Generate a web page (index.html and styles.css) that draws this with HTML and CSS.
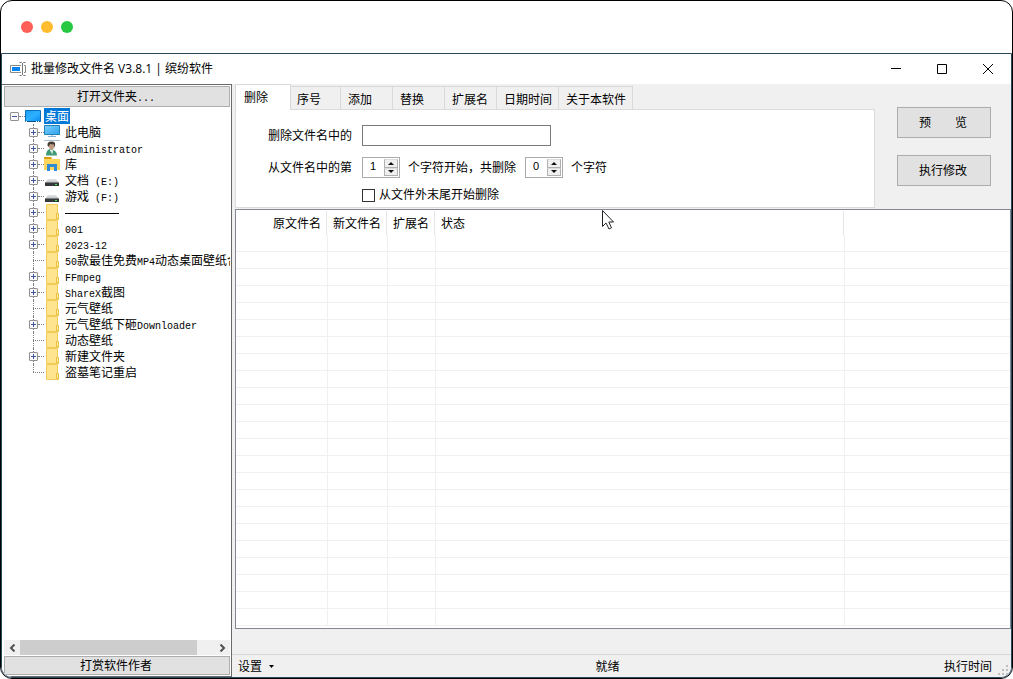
FILE: index.html
```html
<!DOCTYPE html>
<html lang="zh-CN">
<head>
<meta charset="utf-8">
<title>批量修改文件名 V3.8.1 | 缤纷软件</title>
<link rel="stylesheet" href="styles.css">
</head>
<body>
<svg class="defs" aria-hidden="true">
  <defs>
    <linearGradient id="blue" x1="0" y1="0" x2="1" y2="1"><stop offset="0" stop-color="#1ba1f8"/><stop offset=".5" stop-color="#2fb0ff"/><stop offset="1" stop-color="#0a8cf0"/></linearGradient>
    <linearGradient id="sky" x1="0" y1="0" x2="1" y2="1"><stop offset="0" stop-color="#7fd0fb"/><stop offset="1" stop-color="#2da3ee"/></linearGradient>
    <linearGradient id="case" x1="0" y1="0" x2="0" y2="1"><stop offset="0" stop-color="#e4e6e8"/><stop offset="1" stop-color="#b9bdc0"/></linearGradient>
    <symbol id="folder" viewBox="0 0 16 16"><path d="M2.500 .5h11v9.500h1v5.500h-12z" fill="#ffe48f" stroke="#f0cb55"/><path d="M12.500 9.500h2v5h-2z" fill="#fff0b5" stroke="#e8bd3a"/></symbol>
    <symbol id="desk" viewBox="0 0 16 16"><path d="M.5 2.500h15v11H.5z" fill="url(#blue)" stroke="#0b6fb8"/><path d="M1 13.500h14" stroke="#0a4f87"/><path d="M1 13.500h1M11 13.500h1M13 13.500h1" stroke="#fff"/></symbol>
    <symbol id="pc" viewBox="0 0 16 16"><path d="M.5 1.500h15v9H.5z" fill="url(#sky)" stroke="#1f80ba"/><path d="M7 11h2v1H7z" fill="#b9d4e5"/><path d="M4 12.500h8" stroke="#8ab4ce"/></symbol>
    <symbol id="user" viewBox="0 0 16 16"><path d="M0 .5h16" stroke="#a9bac8"/><path d="M5 3h5v4l-1 3H7L5 8z" fill="#bd9a80"/><path d="M3.500 5.500Q3 1.500 7.500 1.500t3.500 4L10 8V4.500L6 4l-1.500 3z" fill="#423c35"/><path d="M2 15.500q0-5 3.500-6.500L9 10q4 1 4 5.500z" fill="#3d9b76"/><path d="m5.500 9.500 3 5 .5-4.500z" fill="#e9eee8"/></symbol>
    <symbol id="lib" viewBox="0 0 16 16"><path d="M0 1h7l1 2v1H0z" fill="#dc9a11"/><path d="M0 3h16v11H0z" fill="#ffd65c"/><path d="M3 8h10v7h-3v-4H6v4H3z" fill="#2f8bd8"/></symbol>
    <symbol id="disk" viewBox="0 0 16 16"><path d="M4 7h8l3 4H1z" fill="url(#case)"/><path d="M1 10.500h14V14H1z" fill="#34383a"/><path d="M11 12.500h2" stroke="#3eea4d"/></symbol>
    <symbol id="up" viewBox="0 0 6 4"><path d="M0 4h6L3 1z" fill="#111"/></symbol>
    <symbol id="down" viewBox="0 0 6 4"><path d="M0 0h6L3 3z" fill="#111"/></symbol>
  </defs>
</svg>
<div class="frame">
  <div class="lights"><i class="red"></i><i class="yellow"></i><i class="green"></i></div>
  <div class="window">
    <header class="titlebar">
      <svg class="app-icon" viewBox="0 0 16 14"><path d="M11 3.500H.5v7H11M14 3.500h1.500v7H14" fill="none" stroke="#8c8c8c"/><path d="M2 5h8v4H2z" fill="#0a84f5"/><path d="M12.500 1v12M9.500 .5h2l1 1 1-1h2M9.500 13.500h2l1-1 1 1h2" fill="none" stroke="#777"/></svg>
      <h1>批量修改文件名 V3.8.1 | 缤纷软件</h1>
      <div class="win-buttons">
        <button aria-label="最小化"><svg viewBox="0 0 11 11"><path d="M0 4.500h10"/></svg></button>
        <button aria-label="最大化"><svg viewBox="0 0 11 11"><path d="M.5 .5h9v9h-9z"/></svg></button>
        <button aria-label="关闭"><svg viewBox="0 0 11 11"><path d="m0 0 10 10m0-10-10 10"/></svg></button>
      </div>
    </header>
    <div class="content">
      <aside class="sidebar">
        <button class="bar-button">打开文件夹<span class="dots">...</span></button>
        <nav class="tree">
          <div class="node root"><button class="toggle minus" aria-label="折叠"></button><i class="twig"></i><svg class="icon"><use href="#desk"/></svg><span class="name selected">桌面</span></div>
          <ul>
            <li class="node"><button class="toggle" aria-label="展开"></button><i class="twig"></i><svg class="icon"><use href="#pc"/></svg><span class="name">此电脑</span></li>
            <li class="node"><button class="toggle" aria-label="展开"></button><i class="twig"></i><svg class="icon"><use href="#user"/></svg><span class="name"><span class="en">Administrator</span></span></li>
            <li class="node"><button class="toggle" aria-label="展开"></button><i class="twig"></i><svg class="icon"><use href="#lib"/></svg><span class="name">库</span></li>
            <li class="node"><button class="toggle" aria-label="展开"></button><i class="twig"></i><svg class="icon"><use href="#disk"/></svg><span class="name">文档<span class="en"> (E:)</span></span></li>
            <li class="node"><button class="toggle" aria-label="展开"></button><i class="twig"></i><svg class="icon"><use href="#disk"/></svg><span class="name">游戏<span class="en"> (F:)</span></span></li>
            <li class="node"><button class="toggle" aria-label="展开"></button><i class="twig"></i><svg class="icon"><use href="#folder"/></svg><span class="name"><span class="rule"></span></span></li>
            <li class="node"><button class="toggle" aria-label="展开"></button><i class="twig"></i><svg class="icon"><use href="#folder"/></svg><span class="name"><span class="en">001</span></span></li>
            <li class="node"><button class="toggle" aria-label="展开"></button><i class="twig"></i><svg class="icon"><use href="#folder"/></svg><span class="name"><span class="en">2023-12</span></span></li>
            <li class="node"><i class="branch"></i><svg class="icon"><use href="#folder"/></svg><span class="name"><span class="en">50</span>款最佳免费<span class="en">MP4</span>动态桌面壁纸合</span></li>
            <li class="node"><button class="toggle" aria-label="展开"></button><i class="twig"></i><svg class="icon"><use href="#folder"/></svg><span class="name"><span class="en">FFmpeg</span></span></li>
            <li class="node"><button class="toggle" aria-label="展开"></button><i class="twig"></i><svg class="icon"><use href="#folder"/></svg><span class="name"><span class="en">ShareX</span>截图</span></li>
            <li class="node"><i class="branch"></i><svg class="icon"><use href="#folder"/></svg><span class="name">元气壁纸</span></li>
            <li class="node"><button class="toggle" aria-label="展开"></button><i class="twig"></i><svg class="icon"><use href="#folder"/></svg><span class="name">元气壁纸下砸<span class="en">Downloader</span></span></li>
            <li class="node"><i class="branch"></i><svg class="icon"><use href="#folder"/></svg><span class="name">动态壁纸</span></li>
            <li class="node"><button class="toggle" aria-label="展开"></button><i class="twig"></i><svg class="icon"><use href="#folder"/></svg><span class="name">新建文件夹</span></li>
            <li class="node"><i class="branch"></i><svg class="icon"><use href="#folder"/></svg><span class="name">盗墓笔记重启</span></li>
          </ul>
        </nav>
        <div class="scrollbar">
          <button aria-label="向左"><svg viewBox="0 0 7 8"><path d="M5.500 .5 2 4l3.500 3.500"/></svg></button>
          <div class="track"><div class="thumb"></div></div>
          <button aria-label="向右"><svg viewBox="0 0 7 8"><path d="M1.500 .5 5 4 1.500 7.500"/></svg></button>
        </div>
        <button class="bar-button">打赏软件作者</button>
      </aside>
      <main class="main">
        <div class="top">
          <section class="tabs-area">
            <div class="tabs" role="tablist">
              <button class="tab active" role="tab" aria-selected="true">删除</button>
              <button class="tab short" role="tab">序号</button>
              <button class="tab" role="tab">添加</button>
              <button class="tab" role="tab">替换</button>
              <button class="tab" role="tab">扩展名</button>
              <button class="tab" role="tab">日期时间</button>
              <button class="tab" role="tab">关于本软件</button>
            </div>
            <form class="panel">
              <div class="line"><label class="lead" for="pattern">删除文件名中的</label><input id="pattern" class="text" type="text"></div>
              <div class="line">
                <label class="lead" for="start">从文件名中的第</label>
                <div class="spin"><input id="start" type="text" value="1"><div class="steps"><button type="button" aria-label="增加"><svg><use href="#up"/></svg></button><button type="button" aria-label="减少"><svg><use href="#down"/></svg></button></div></div>
                <label for="count">个字符开始，共删除</label>
                <div class="spin"><input id="count" type="text" value="0"><div class="steps"><button type="button" aria-label="增加"><svg><use href="#up"/></svg></button><button type="button" aria-label="减少"><svg><use href="#down"/></svg></button></div></div>
                <span>个字符</span>
              </div>
              <label class="check"><input type="checkbox">从文件外末尾开始删除</label>
            </form>
          </section>
          <div class="actions">
            <button>预　　览</button>
            <button>执行修改</button>
          </div>
        </div>
        <div class="list">
          <table>
            <colgroup><col class="c-old"><col class="c-new"><col class="c-ext"><col class="c-state"><col></colgroup>
            <thead><tr><th class="end"><span>原文件名</span></th><th><span>新文件名</span></th><th><span>扩展名</span></th><th><span>状态</span></th><th></th></tr></thead>
            <tbody>
              <tr><td></td><td></td><td></td><td></td><td></td></tr>
              <tr><td></td><td></td><td></td><td></td><td></td></tr>
              <tr><td></td><td></td><td></td><td></td><td></td></tr>
              <tr><td></td><td></td><td></td><td></td><td></td></tr>
              <tr><td></td><td></td><td></td><td></td><td></td></tr>
              <tr><td></td><td></td><td></td><td></td><td></td></tr>
              <tr><td></td><td></td><td></td><td></td><td></td></tr>
              <tr><td></td><td></td><td></td><td></td><td></td></tr>
              <tr><td></td><td></td><td></td><td></td><td></td></tr>
              <tr><td></td><td></td><td></td><td></td><td></td></tr>
              <tr><td></td><td></td><td></td><td></td><td></td></tr>
              <tr><td></td><td></td><td></td><td></td><td></td></tr>
              <tr><td></td><td></td><td></td><td></td><td></td></tr>
              <tr><td></td><td></td><td></td><td></td><td></td></tr>
              <tr><td></td><td></td><td></td><td></td><td></td></tr>
              <tr><td></td><td></td><td></td><td></td><td></td></tr>
              <tr><td></td><td></td><td></td><td></td><td></td></tr>
              <tr><td></td><td></td><td></td><td></td><td></td></tr>
              <tr><td></td><td></td><td></td><td></td><td></td></tr>
              <tr><td></td><td></td><td></td><td></td><td></td></tr>
              <tr><td></td><td></td><td></td><td></td><td></td></tr>
              <tr><td></td><td></td><td></td><td></td><td></td></tr>
              <tr><td></td><td></td><td></td><td></td><td></td></tr>
            </tbody>
          </table>
          <svg class="cursor" viewBox="0 0 12 20"><path d="M.5 .5v16l3.500-3.500 3 6 2.500-1.200L6.800 12h4.700z" fill="#fff" stroke="#222"/></svg>
        </div>
        <footer class="status">
          <button class="settings">设置<svg viewBox="0 0 5 3"><path d="M0 0h5L2.500 3z"/></svg></button>
          <span class="ready">就绪</span>
          <span class="time">执行时间</span>
          <svg class="grip" viewBox="0 0 10 10"><path d="M8 0h2v2H8zM4 4h2v2H4zM8 4h2v2H8zM0 8h2v2H0zM4 8h2v2H4zM8 8h2v2H8z"/></svg>
        </footer>
      </main>
    </div>
  </div>
</div>
</body>
</html>
```
FILE: styles.css
```css
* { box-sizing: border-box; }
body { margin: 0; background: #fff; color: #000; font: 12px/16px "Liberation Sans", "Noto Sans CJK SC", sans-serif; }
button, input { font: inherit; color: inherit; margin: 0; padding: 0; }
button { border: 0; background: none; }
.defs { display: block; width: 0; height: 0; position: absolute; }

.frame { height: 100vh; display: flex; flex-direction: column; border: 1px solid #000; border-radius: 12px; overflow: hidden; }
.lights { flex: none; height: 52px; display: flex; align-items: center; gap: 8px; padding-left: 20px; }
.lights i { width: 12px; height: 12px; border-radius: 50%; }
.red { background: #ff5f57; }
.yellow { background: #febc2e; }
.green { background: #28c840; }

.window { flex: 1; min-height: 0; display: flex; flex-direction: column; border: 1px solid #2a4a60; border-radius: 0 0 11px 11px; overflow: hidden; }
.titlebar { flex: none; height: 30px; display: flex; align-items: center; padding-left: 8px; }
.app-icon { flex: none; width: 16px; height: 14px; margin-right: 5px; }
.titlebar h1 { flex: 1; margin: 0; font: 12px/16px "Open Sans", "Noto Sans CJK SC", sans-serif; }
.win-buttons { display: flex; }
.win-buttons button { width: 46px; height: 29px; display: grid; place-items: center; }
.win-buttons svg { width: 11px; height: 11px; fill: none; stroke: #000; }

.content { flex: 1; min-height: 0; display: flex; background: #f0f0f0; }
.sidebar { flex: none; width: 230px; display: flex; flex-direction: column; background: #fff; border: 1px solid #696969; border-left: 0; padding: 1px 1px 1px 2px; }
.bar-button { flex: none; height: 21px; padding: 1px 2px 0 0; background: #e1e1e1; border: 1px solid #adadad; }
.sidebar > .bar-button:last-child { height: 19px; margin-top: 1px; line-height: 16px; }
.dots, .en { font-family: "Liberation Mono", monospace; font-size: 10px; line-height: 1; white-space: pre; }

.tree { flex: 1; min-height: 0; overflow: hidden; padding-top: 1px; }
.tree ul { list-style: none; margin: 0; padding: 0 0 0 25px; }
.node { position: relative; height: 16px; display: flex; align-items: center; white-space: nowrap; }
.root { padding-left: 6px; }
.toggle { position: relative; z-index: 1; flex: none; width: 9px; height: 9px; border: 1px solid #919191; border-radius: 1px; background: linear-gradient(#3c56a0, #3c56a0) center / 5px 1px no-repeat, linear-gradient(#3c56a0, #3c56a0) center / 1px 5px no-repeat, #f8f8f8; }
.toggle.minus { background: linear-gradient(#3c56a0, #3c56a0) center / 5px 1px no-repeat, #f8f8f8; }
.twig, .branch { flex: none; border-top: 1px dotted #808080; }
.twig { width: 6px; }
.branch { width: 11px; margin-left: 4px; }
.tree li::before { content: ""; position: absolute; left: 4px; top: 0; height: 16px; border-left: 1px dotted #808080; }
.tree li:last-child::before { height: 8px; }
.icon { flex: none; width: 16px; height: 16px; }
.name { margin-left: 4px; padding: 2px 2px 0 1px; line-height: 14px; }
.root .name { margin-left: 3px; padding: 2px 1px 0; }
.selected { background: #0078d7; color: #fff; }
.rule { display: block; width: 54px; border-top: 1px solid #000; }

.scrollbar { flex: none; height: 15px; display: flex; background: #f0f0f0; }
.scrollbar button { width: 16px; display: grid; place-items: center; }
.scrollbar svg { width: 7px; height: 8px; fill: none; stroke: #505050; stroke-width: 2; }
.track { flex: 1; }
.thumb { width: 91%; height: 100%; background: #cdcdcd; }

.main { flex: 1; min-width: 0; display: flex; flex-direction: column; }
.top { flex: none; display: flex; justify-content: space-between; padding: 0 20px 0 3px; }
.tabs-area { flex: 1; max-width: 640px; }
.tabs { display: flex; align-items: flex-end; height: 25px; }
.tab { height: 23px; padding: 3px 6px 0 7px; min-width: 52px; border: 1px solid #d9d9d9; border-left: 0; border-bottom: 0; text-align: left; }
.tab.short { min-width: 50px; padding-left: 6px; }
.tab.active { width: 56px; height: 26px; margin-bottom: -1px; padding: 0 8px; background: #fff; border-left: 1px solid #d9d9d9; position: relative; }
.panel { height: 99px; padding: 15px 0 0 32px; background: #fff; border: 1px solid #dcdcdc; }
.line { display: flex; align-items: center; height: 21px; margin-bottom: 11px; gap: 8px; }
.lead { width: 86px; }
.text { width: 189px; height: 21px; border: 1px solid #7a7a7a; background: #fff; }
.spin { width: 38px; height: 21px; display: flex; border: 1px solid #ababab; }
.spin + label, .spin + span { margin-right: 1px; }
.spin input { width: 20px; min-width: 0; height: 16px; border: 0; text-align: center; font-size: 11px; background: #fff; }
.steps { flex: 1; display: flex; flex-direction: column; padding: 1px; }
.steps button { flex: 1; display: grid; place-items: center; background: #f0f0f0; border: 1px solid #b0b0b0; border-top-color: #ddd; }
.steps svg { width: 6px; height: 4px; }
.check { display: flex; align-items: center; gap: 4px; width: max-content; margin: -2px 0 0 94px; }
.check input { appearance: none; width: 13px; height: 13px; border: 1px solid #333; background: #fff; }
.actions { width: 94px; display: flex; flex-direction: column; gap: 17px; padding-top: 23px; }
.actions button { height: 31px; background: #e1e1e1; border: 1px solid #adadad; padding-right: 2px; }

.list { position: relative; flex: 1; min-height: 0; margin: 1px 0 0 3px; background: #fff; border: 1px solid #828790; }
table { width: 100%; table-layout: fixed; border-collapse: separate; border-spacing: 0; }
.c-old { width: 92px; }
.c-new { width: 60px; }
.c-ext { width: 48px; }
.c-state { width: 409px; }
th { height: 25px; padding: 1px 1px 0 0; font-weight: normal; text-align: left; }
th span { display: block; height: 24px; padding: 0 5px; line-height: 26px; border-right: 1px solid #e5e5e5; }
.end { text-align: right; }
td { height: 17px; padding: 0; border-bottom: 1px solid #f0f0f0; border-right: 1px solid #f0f0f0; }
td:last-child { border-right: 0; }
.cursor { position: absolute; left: 366px; top: 0; width: 12px; height: 20px; }

.status { flex: none; height: 23px; margin-top: 25px; display: grid; grid-template-columns: 1fr auto 1fr 18px; align-items: center; border-top: 1px solid #d7d7d7; padding: 1px 0 0; font-family: "Open Sans", "Noto Sans CJK SC", sans-serif; }
.settings { justify-self: start; display: flex; align-items: center; gap: 7px; padding-left: 6px; }
.settings svg { width: 5px; height: 3px; }
.ready { padding-right: 10px; }
.time { justify-self: end; padding-right: 1px; }
.grip { width: 10px; height: 10px; margin: 6px 0 0 5px; fill: #bfbfbf; }
```
